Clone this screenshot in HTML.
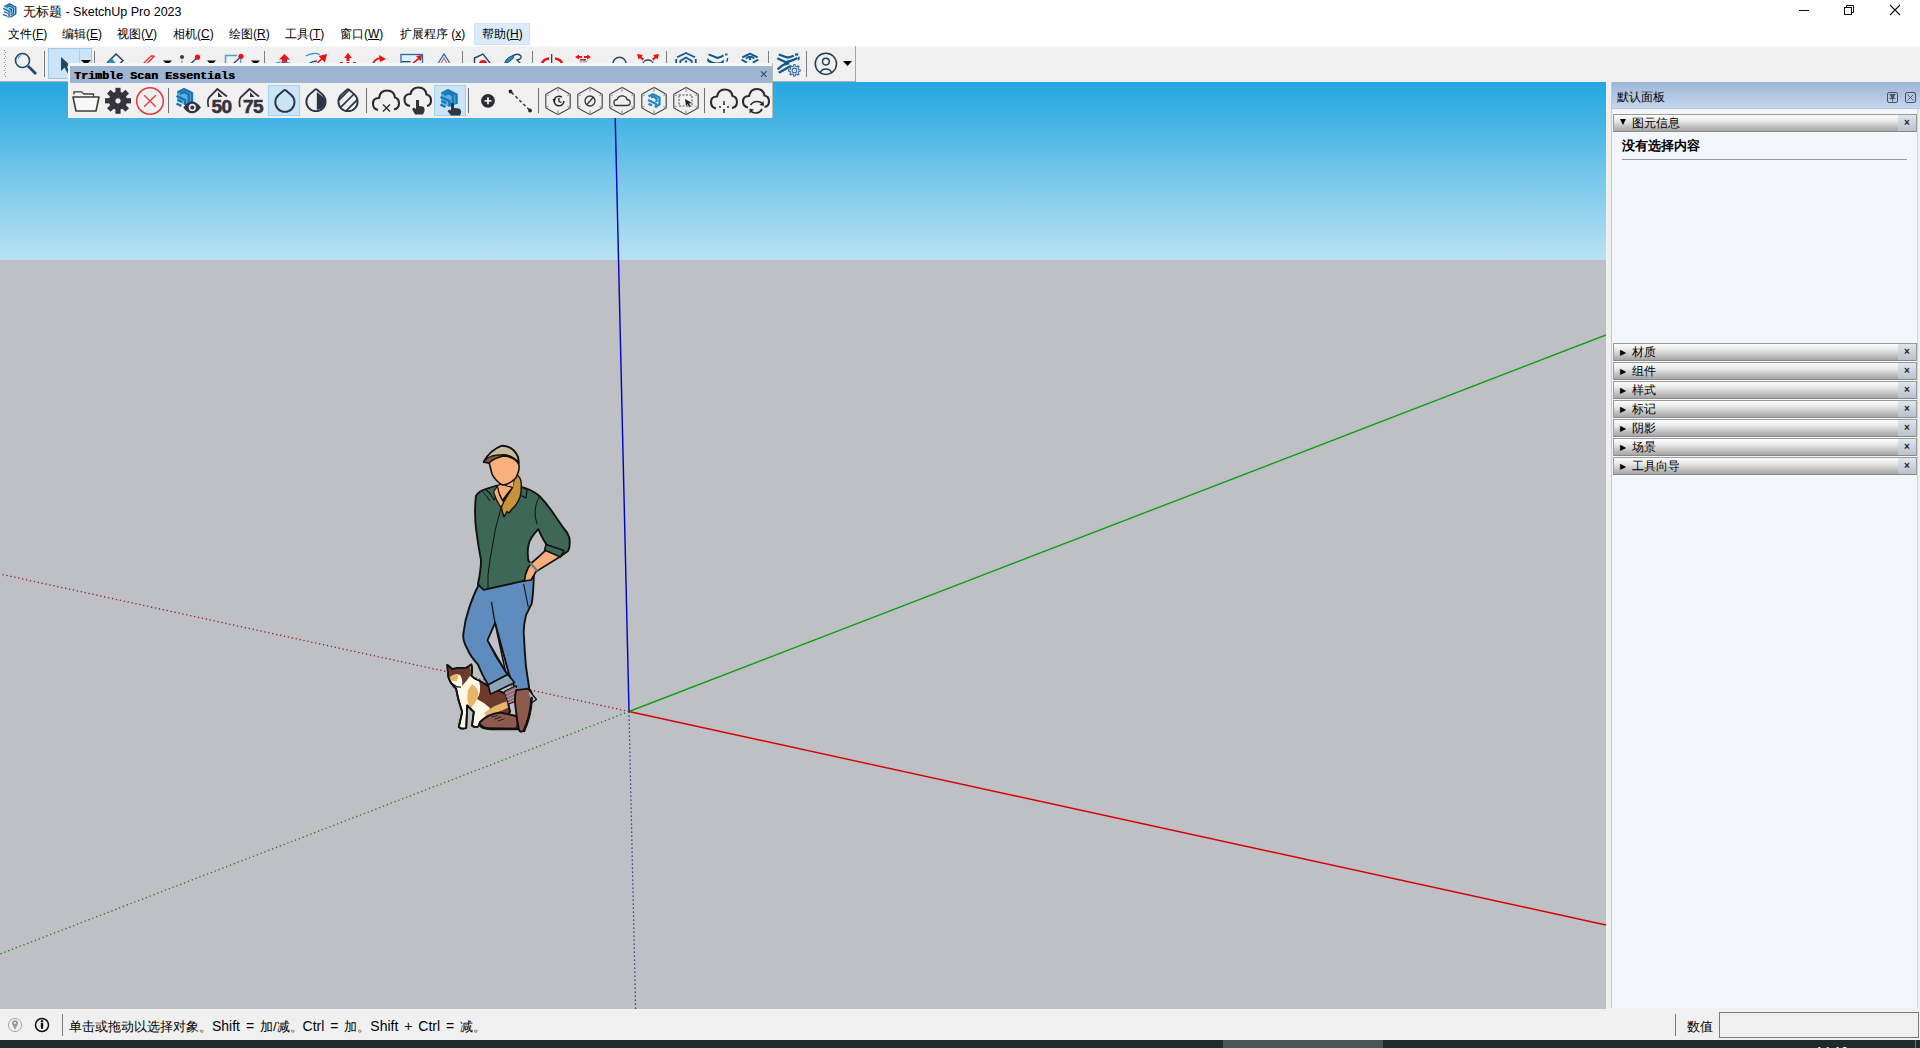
<!DOCTYPE html>
<html><head><meta charset="utf-8">
<style>
*{box-sizing:border-box;margin:0;padding:0}
html,body{width:1920px;height:1048px;overflow:hidden;background:#f0f0f0;font-family:"Liberation Sans",sans-serif;color:#000}
.abs{position:absolute}
#title{left:0;top:0;width:1920px;height:23px;background:#fff}
#menu{left:0;top:23px;width:1920px;height:23px;background:#fff}
.mi{position:absolute;top:4px;font-size:12px;line-height:14px;white-space:nowrap;color:#000}
#toolbar{left:0;top:46px;width:1920px;height:36px;background:#f0f0f0;border-top:1px solid #f6f6f6}
#viewport{left:0;top:82px;width:1606px;height:927px;background:#bfc0c5;overflow:hidden}
#sky{left:0;top:0;width:1606px;height:178px;background:linear-gradient(#24a8df,#48b5e4 25%,#7ac8ea 55%,#b9e2f3)}
#panel{left:1611px;top:82px;width:309px;height:926px;background:#f3f6fb;border-left:1px solid #c8c8c8}
#ptitle{left:0;top:0;width:309px;height:27px;background:linear-gradient(#9db5d6,#c5d6ef);border-bottom:1px solid #b9c6d6}
.sh{position:absolute;left:1px;width:304px;height:18px;background:linear-gradient(#fdfdfd 0%,#e9e9e9 35%,#b9b9b9 80%,#a6a6a6 100%);border:1px solid #9a9a9a;border-bottom-color:#8a8a8a}
.sh .tri{position:absolute;left:6px;top:4px;font-size:8px;line-height:9px}
.sh .t{position:absolute;left:18px;top:1px;font-size:12px;line-height:14px}
.sh .x{position:absolute;right:0;top:0;width:18px;height:16px;background:linear-gradient(#dfe6ee,#b8c2cc);font-size:10px;font-weight:bold;text-align:center;line-height:15px;color:#222}
#status{left:0;top:1009px;width:1920px;height:31px;background:#f0f0f0}
#taskbar{left:0;top:1040px;width:1920px;height:8px;background:#1d2a2e}
.sep{position:absolute;width:1px;background:#7a7a7a}
.lt{font-size:14px}
</style></head><body>
<div id="title" class="abs">
  <div class="abs" style="left:23px;top:4px;font-size:12.5px;line-height:16px;color:#000">无标题 - SketchUp Pro 2023</div>
<svg class="abs" style="left:0;top:0" width="24" height="23" viewBox="0 0 24 23">
<path d="M4 6.5 L9.5 3.8 L15.8 7 L15.8 13.8 L10.5 17.3 L9 17.5 L9 11.3 L3.2 8.5 Z" fill="#9fd6f2" stroke="none"/>
<g stroke="#1a5f95" stroke-width="1.35" fill="none" stroke-linejoin="round">
<path d="M4.3 6.5 L9.5 3.8 L15.8 7 L15.8 13.8 L10.5 17.3"/>
<path d="M6.3 7.3 L9.5 5.9 L13.5 8 L13.5 13 L11 14.8"/>
<path d="M9.2 8.3 L11.3 9.3 L11.3 12.5"/>
<path d="M3.2 8.5 L9 11.3 L9 17.5"/>
<path d="M4 11.5 L7.7 13.3"/>
<path d="M3.2 14.3 L7.7 16.5"/>
</g>
</svg>
<svg class="abs" style="left:1780px;top:0" width="140" height="23" viewBox="1780 0 140 23">
<rect x="1799" y="10" width="10" height="1" fill="#111"/>
<rect x="1844.5" y="7.5" width="7" height="7" fill="none" stroke="#111" stroke-width="1"/>
<path d="M1846.5 7.5 L1846.5 5.5 L1853.5 5.5 L1853.5 12.5 L1851.5 12.5" fill="none" stroke="#111" stroke-width="1"/>
<path d="M1890 5 L1900 15 M1900 5 L1890 15" stroke="#111" stroke-width="1.1"/>
</svg>
</div>
<div id="menu" class="abs">
  <div class="abs" style="left:474px;top:0px;width:56px;height:22px;background:#dcebfb;border:1px solid #cfe3f8"></div>
  <div class="mi" style="left:8px">文件(<u>F</u>)</div>
  <div class="mi" style="left:62px">编辑(<u>E</u>)</div>
  <div class="mi" style="left:117px">视图(<u>V</u>)</div>
  <div class="mi" style="left:173px">相机(<u>C</u>)</div>
  <div class="mi" style="left:229px">绘图(<u>R</u>)</div>
  <div class="mi" style="left:285px">工具(<u>T</u>)</div>
  <div class="mi" style="left:340px">窗口(<u>W</u>)</div>
  <div class="mi" style="left:400px">扩展程序 (<u>x</u>)</div>
  <div class="mi" style="left:482px">帮助(<u>H</u>)</div>
</div>
<div id="toolbar" class="abs"></div>
<svg class="abs" style="left:0;top:0" width="1920" height="84" viewBox="0 0 1920 84">
<!-- gripper -->
<g fill="#9a9a9a"><rect x="4" y="50" width="1" height="1"/><rect x="5" y="52" width="1" height="1"/><rect x="4" y="54" width="1" height="1"/><rect x="5" y="56" width="1" height="1"/><rect x="4" y="58" width="1" height="1"/><rect x="5" y="60" width="1" height="1"/><rect x="4" y="62" width="1" height="1"/><rect x="5" y="64" width="1" height="1"/><rect x="4" y="66" width="1" height="1"/><rect x="5" y="68" width="1" height="1"/><rect x="4" y="70" width="1" height="1"/><rect x="5" y="72" width="1" height="1"/><rect x="4" y="74" width="1" height="1"/><rect x="5" y="76" width="1" height="1"/></g>
<!-- magnifier -->
<circle cx="22.5" cy="60.5" r="7" fill="none" stroke="#1f4868" stroke-width="1.6"/>
<path d="M18 58.5 A5 5 0 0 1 21 55.5" fill="none" stroke="#3fa9e0" stroke-width="1.2"/>
<path d="M28 66 L36 74" stroke="#1f4868" stroke-width="2.6" stroke-linecap="butt"/>
<!-- separators -->
<g fill="#7d7d7d">
<rect x="44" y="51" width="1" height="26"/>
<rect x="94" y="51" width="1" height="26"/>
<rect x="264" y="51" width="1" height="26"/>
<rect x="462" y="51" width="1" height="26"/>
<rect x="532" y="51" width="1" height="26"/>
<rect x="666" y="51" width="1" height="26"/>
<rect x="768" y="51" width="1" height="26"/>
<rect x="806" y="51" width="1" height="26"/>
</g>
<!-- select button -->
<rect x="48.5" y="48.5" width="43" height="30" fill="#cce4f7" stroke="#99c9ef"/>
<rect x="79" y="49" width="1" height="29" fill="#a9d1f1"/>
<path d="M61 57 L61 71 L64.5 67.5 L67.5 73 L69.5 72 L66.8 66.5 L71 66 Z" fill="#1b4a6c"/>
<path d="M81 60 L91 60 L86 65 Z" fill="#000"/>
<!-- eraser -->
<path d="M107 63 L116 54 L123 60.5 L120 63.5" fill="none" stroke="#1f4868" stroke-width="1.5"/>
<path d="M107 63.5 L112 58.5 L116 63.5 Z" fill="#2c8fd0"/>
<!-- pencil -->
<path d="M143.5 63.5 L151 56 M147 63.5 L154.5 56 M151 56 L154.5 56" stroke="#e53030" stroke-width="1.3" fill="none"/>
<path d="M163 60.5 L172 60.5 L167.5 65 Z" fill="#000"/>
<!-- line tools -->
<circle cx="182" cy="57" r="2.1" fill="#1f4868"/>
<rect x="181.5" y="60.5" width="1" height="3" fill="#5b7d95"/>
<path d="M191 63.5 L197 57.5" stroke="#1f4868" stroke-width="1.2"/>
<circle cx="197.5" cy="57.2" r="2.6" fill="#ee1111"/>
<path d="M207 60.5 L216 60.5 L211.5 65 Z" fill="#000"/>
<!-- rectangle -->
<path d="M225.5 64 L225.5 55.5 L237 55.5" fill="none" stroke="#4aa0d6" stroke-width="1.5"/>
<path d="M233.5 63.5 L240 57.5" stroke="#1f4868" stroke-width="1.2"/>
<rect x="240" y="59" width="1.3" height="5" fill="#4aa0d6"/>
<circle cx="241" cy="56.3" r="2.6" fill="#ee1111"/>
<path d="M251 60.5 L260 60.5 L255.5 65 Z" fill="#000"/>
<!-- push pull -->
<path d="M284.3 54 L290 59.5 L287 59.5 L287 64 L282 64 L282 59.5 L279 59.5 Z" fill="#ee1111"/>
<path d="M275 63.5 Q283 60 291 63.5" fill="none" stroke="#2a8fcf" stroke-width="1.2"/>
<!-- follow me -->
<path d="M306 56 Q313 51.5 320 54.5" fill="none" stroke="#2a8fcf" stroke-width="1.3"/>
<path d="M309 63.5 Q313 61 317 61" fill="none" stroke="#1f4868" stroke-width="1.3"/>
<path d="M317 63.5 L322 58.5 L320 56.5 L326 55 L324.5 61 L322.5 59" fill="#ee1111" stroke="#ee1111" stroke-width="1.5"/>
<!-- move -->
<path d="M348 53 L352 58 L349.5 58 L349.5 61 L346.5 61 L346.5 58 L344 58 Z" fill="#ee1111"/>
<rect x="340" y="62" width="3" height="2" fill="#ee1111"/><rect x="353" y="62" width="3" height="2" fill="#ee1111"/><rect x="346.5" y="62" width="3" height="2" fill="#ee1111"/>
<!-- rotate -->
<path d="M373 63.5 Q376 57.5 381 58.5" fill="none" stroke="#ee1111" stroke-width="1.8"/>
<path d="M379 55 L386 59 L380 62 Z" fill="#ee1111"/>
<!-- scale -->
<rect x="401" y="54.5" width="21.5" height="10" fill="#dff0fb" stroke="#1f6fb0" stroke-width="1.3"/>
<rect x="401.5" y="61" width="9" height="1.3" fill="#1f4868"/>
<path d="M411 64 L418 58 L416 56 L422 55 L421 61 L419 59.5 L413 64 Z" fill="#ee1111"/>
<!-- offset -->
<path d="M438 63.5 L444 54 L450 63.5" fill="none" stroke="#1f6fb0" stroke-width="1.3"/>
<path d="M441 63.5 L444 58 L447 63.5" fill="none" stroke="#c07080" stroke-width="1.2"/>
<!-- tape -->
<path d="M474.5 64 L474.5 58 L483 54 L490 63" fill="none" stroke="#1f4868" stroke-width="1.4"/>
<path d="M479 64 A4 4 0 0 1 487 64 Z" fill="#ee1111"/>
<!-- paint -->
<path d="M504.5 63.5 Q506 58 512 56 Q515 55.5 513 58.5 Q509 62 505 64 Z" fill="#2c8fd0" stroke="#1f4868" stroke-width="1"/>
<path d="M512 56 Q518 52.5 521 56 Q522 59 517 60 L521 64" fill="none" stroke="#1f4868" stroke-width="1.3"/>
<!-- orbit -->
<path d="M542 64 Q543 59 549 58.5 M555 58.5 Q561 59 562 64" fill="none" stroke="#ee1111" stroke-width="2.6"/>
<rect x="551" y="54" width="1.3" height="10" fill="#1f4868"/>
<!-- pan -->
<path d="M575 57 L579 54.5 L579 56 L582 56 L582 58 L579 58 L579 59.5 Z M591 57 L587 54.5 L587 56 L584 56 L584 58 L587 58 L587 59.5 Z" fill="#ee1111"/>
<rect x="580" y="59" width="6" height="1.5" fill="#ee1111"/>
<path d="M581 64 L581 60 M584 64 L584 60 L587 62" fill="none" stroke="#5d7a90" stroke-width="1"/>
<!-- zoom -->
<path d="M612.8 64 A6.7 6.7 0 0 1 626.2 64" fill="none" stroke="#1f4868" stroke-width="1.5"/>
<!-- zoom extents -->
<path d="M637 54 L643 55 L641.5 56.5 L644 59 L642.5 60.5 L640 58 L638.5 59.5 Z M659 54 L653 55 L654.5 56.5 L652 59 L653.5 60.5 L656 58 L657.5 59.5 Z" fill="#ee1111"/>
<path d="M643 64 A5 4 0 0 1 653 64" fill="none" stroke="#1f4868" stroke-width="1.3"/>
<!-- trimble blue icons -->
<g fill="none" stroke="#0d5a8f" stroke-width="1.8" stroke-linejoin="round">
<path d="M677 57.2 L686 53 L695 57.2"/>
<path d="M680.2 61 L686 57.4 L691.8 61"/>
</g>
<g fill="#0d5a8f"><rect x="675.3" y="59" width="1.8" height="4.6"/><rect x="694.9" y="59" width="1.8" height="4.6"/><rect x="679.4" y="60.5" width="1.8" height="3.1"/><rect x="690.8" y="60.5" width="1.8" height="3.1"/><circle cx="686" cy="61.4" r="1.2"/></g>
<path d="M708.5 54.3 L717.5 58 Q721 56.8 723.5 55.3" fill="none" stroke="#0d5a8f" stroke-width="2"/>
<rect x="725" y="53.6" width="2.5" height="1.8" fill="#0d5a8f"/>
<path d="M707.3 58 Q712 62.5 717.5 62.5 Q721.5 62.5 724 59.6 L723.5 63.6 Q720 64.4 716 64.2 Q709 63.8 707.3 61 Z" fill="#0d5a8f"/>
<path d="M726.8 58.3 L728.3 57.8 L727.8 61.5 L726.3 62 Z" fill="#0d5a8f"/>
<g fill="none" stroke="#0d5a8f" stroke-width="1.9" stroke-linejoin="round">
<path d="M742.3 57.4 L750 53.6 L757.6 57.4"/>
<path d="M745.8 58.4 Q750 55 754.2 58.4"/>
<path d="M741.5 59.5 L746.8 62.6 M752.8 62.6 L758.4 59.5"/>
</g>
<circle cx="750" cy="58.9" r="1.3" fill="#0d5a8f"/>
<!-- x gear icon -->
<g fill="none" stroke="#0d5a8f" stroke-width="2.3" stroke-linejoin="round">
<path d="M778.8 54.5 Q784 56.5 787.8 57.6 Q791 57 793.8 55.8"/>
<path d="M777.3 58.2 Q782 60.5 786 62.2 Q792 61 797.5 58"/>
<path d="M777.6 69.4 Q782 65.5 787.5 62.6"/>
<path d="M778.8 72.8 Q784 70 791 65.8"/>
</g>
<path d="M784 63.6 L789.5 61.8 L789 64.5 L785 65.5 Z" fill="#0d5a8f"/>
<rect x="795" y="53.4" width="3.2" height="2.2" fill="#0d5a8f"/>
<path d="M798 57 L799.8 56.4 L799.4 60 L797.8 60.6 Z" fill="#0d5a8f"/>
<path d="M798.60 69.46 L800.26 69.69 L800.26 71.11 L798.60 71.34 L798.38 72.03 L798.03 72.70 L799.04 74.04 L798.04 75.04 L796.70 74.03 L796.06 74.37 L795.34 74.60 L795.11 76.26 L793.69 76.26 L793.46 74.60 L792.77 74.38 L792.10 74.03 L790.76 75.04 L789.76 74.04 L790.77 72.70 L790.43 72.06 L790.20 71.34 L788.54 71.11 L788.54 69.69 L790.20 69.46 L790.42 68.77 L790.77 68.10 L789.76 66.76 L790.76 65.76 L792.10 66.77 L792.74 66.43 L793.46 66.20 L793.69 64.54 L795.11 64.54 L795.34 66.20 L796.03 66.42 L796.70 66.77 L798.04 65.76 L799.04 66.76 L798.03 68.10 L798.37 68.74 Z" fill="#f0f0f0" stroke="#3a6e9e" stroke-width="1.1" stroke-linejoin="round"/>
<circle cx="794.4" cy="70.4" r="2.3" fill="none" stroke="#3a6e9e" stroke-width="1.1"/>
<!-- user -->
<circle cx="825.9" cy="63.8" r="10.6" fill="none" stroke="#1a3e5c" stroke-width="1.5"/>
<circle cx="825.9" cy="61.6" r="3.4" fill="none" stroke="#1a3e5c" stroke-width="1.4"/>
<path d="M820.2 72.8 A6 5.5 0 0 1 831.6 72.8" fill="none" stroke="#1a3e5c" stroke-width="1.4"/>
<path d="M843 61 L852 61 L847.5 66 Z" fill="#000"/>
<rect x="855" y="46" width="1" height="36" fill="#a5a5a5"/>
<rect x="0" y="81" width="856" height="1" fill="#a8b0b6"/>
</svg>
<div id="viewport" class="abs">
  <div id="sky" class="abs"></div>
<svg class="abs" style="left:0;top:0" width="1606" height="927" viewBox="0 82 1606 927">
<line x1="629" y1="711.5" x2="1606" y2="925" stroke="#d40000" stroke-width="1.4"/>
<line x1="629" y1="711.5" x2="1606" y2="335" stroke="#10a010" stroke-width="1.4"/>
<line x1="629" y1="711.5" x2="614.4" y2="82" stroke="#0000c0" stroke-width="1.4"/>
<line x1="629" y1="711.5" x2="0" y2="574" stroke="#8a2030" stroke-width="1.3" stroke-dasharray="1.3 2.7"/>
<line x1="629" y1="711.5" x2="0" y2="954" stroke="#207820" stroke-width="1.3" stroke-dasharray="1.3 2.8"/>
<line x1="629" y1="711.5" x2="635.6" y2="1009" stroke="#202070" stroke-width="1.3" stroke-dasharray="1.3 2.7"/>
<!-- cat -->
<g stroke="#111" stroke-width="1.8" stroke-linejoin="round">
<path d="M447.3 664.9 L452.5 669.2 Q459 667.2 465.5 668.2 L471.3 664.5 Q473 670 471.2 675.5 Q474 679 479 680.5 L488 686 L506 694 L510 712 Q505 718 499 720.5 L480 722.5 L478.5 726.2 Q474.5 728 472 725.5 L473.8 712 L467.2 705.5 L466.2 728 Q461.5 729.8 458.8 726.8 L462.2 712 Q458 700 456 688.5 Q450.5 684 448.4 677.1 Z" fill="#fff8e8"/>
</g>
<g stroke="none">
<path d="M448.5 666.5 L452.5 669.5 Q459 667.5 465.5 668.5 L470.3 666 Q471.5 671 470.3 675.5 Q466 682 462 686 Q463 679 460 675 Q456 673 452 676 L449.5 678 Q448 672 448.5 666.5 Z" fill="#6b3a2c"/>
<path d="M450 677 Q454 673.5 458.5 675 L457 681 Q452 682 450 679 Z" fill="#e8b468"/>
<path d="M479 680.5 L488 686 L506 694 L510 712 Q505 718 499 720.5 L481 722 Q487 716 490 708 Q485 703 477 699 Q482 692 479 680.5 Z" fill="#6b3a2c"/>
<path d="M472 684 Q480 688 478 697 Q474 706 470 708 Q466 700 468 690 Z" fill="#e8b468"/>
<path d="M484 713 Q496 704 508 701 L509.5 707 Q498 712 487 718 Z" fill="#e8b468"/>
</g>
<path d="M447.3 664.9 L452.5 669.2 Q459 667.2 465.5 668.2 L471.3 664.5 Q473 670 471.2 675.5 Q474 679 479 680.5 L488 686 L506 694 L510 712 Q505 718 499 720.5 L480 722.5 L478.5 726.2 Q474.5 728 472 725.5 L473.8 712 L467.2 705.5 L466.2 728 Q461.5 729.8 458.8 726.8 L462.2 712 Q458 700 456 688.5 Q450.5 684 448.4 677.1 Z" fill="none" stroke="#111" stroke-width="1.8" stroke-linejoin="round"/>
<path d="M452 683.5 Q456 687.5 461 687" fill="none" stroke="#111" stroke-width="1.2"/>
<g stroke="#111" stroke-width="1.9" stroke-linejoin="round" stroke-linecap="round">
<!-- left shoe -->
<path d="M480 722 Q478.5 727.5 485 728.3 L516.3 728.8 Q519 724 516.3 716 L500 712.5 Q488 714 480 722 Z" fill="#8e5a4d"/>
<path d="M481 725.5 Q484 729 492 729 L517 729" fill="none" stroke-width="2.6"/>
<path d="M492 717 L498 715.5 M495 719 L501 717 M498 721 L504 719" stroke="#2a2020" stroke-width="1"/>
<!-- jeans -->
<path d="M481.3 575 L533.8 575 Q533.5 592 531.7 603.6 L526 615.1 Q523.6 625 523.7 632.3 Q524.5 650 526 666.6 L529.4 689.5 L516 691 L508.8 673.5 L495.1 623.1 L487.6 640.3 Q495 656 505.4 671.2 L507.7 674.6 L488.2 684.9 Q482 675 477.9 664.3 Q470 656 467.6 649.4 Q462 640 463.6 632.3 Q465 620 468.7 609.4 Q473 596 477.9 586.5 Z" fill="#5f8cbf"/>
<path d="M495.1 623.1 L487.6 640.3 L505.4 671.2 Z" fill="#c0c1c6" stroke-width="1.6"/>
<path d="M491.6 602.5 Q493 612 495.1 623.1" fill="none" stroke-width="1.3"/>
<path d="M488.2 684.9 L507.7 674.6 L514.5 682.6 L490.5 694.1 Z" fill="#8ea4b8" stroke-width="1.6"/>
<path d="M523.7 584.2 Q526 596 528.3 607" fill="none" stroke-width="1.1"/>
<!-- socks -->
<path d="M504.1 691.6 L516.3 685.5 L517.1 700.8 L508.7 703.9 Z" fill="#8a7078" stroke-width="1.1"/>
<path d="M505 694 L516.5 688.5 M506 697 L516.8 692 M507 700 L517 695.5 M508 703 L517 699" stroke="#d8a0b0" stroke-width="0.8"/>
<!-- right shoe -->
<path d="M516.3 690.1 L527.8 688.6 Q533 691 531.6 697.7 Q531 715 524 730 Q521 733.5 519 730 Q517 720 515.6 708 Q514 697 516.3 690.1 Z" fill="#8e5a4d"/>
<path d="M528 689 L536.5 699.5 L531.5 703" fill="#aeb4bc" stroke-width="1.2"/>
<path d="M531.6 698 Q531 715 524 731" fill="none" stroke-width="2.6"/>
<!-- shirt -->
<path d="M475.9 496 Q479 491 485.6 489.2 L497 485.7 L503 500 L512.7 487.3 L521 486.9 Q531 489 539.4 496 Q546 503 550.9 509.8 L563.4 528 Q570 535 569.7 541.8 Q570 548 568 551 L560 556.7 Q548 552 538.3 529.2 Q530 538 528.5 545 Q527 552 528.5 561 L533.7 566 Q530 574 527 578 L524.5 580.7 L519.1 581.9 L483.6 589.9 L477.9 584.2 Q481 570 481 560 Q478 545 476.4 531.5 Q474 515 475.9 496 Z" fill="#3d6756"/>
<path d="M503 500 Q494 530 490 560 Q487 575 488 588" fill="none" stroke-width="1"/>
<path d="M539 497 Q532 510 537 524" fill="none" stroke-width="1"/>
<path d="M483 492 Q487 496 490 501" fill="none" stroke-width="1"/>
<path d="M485.5 489.5 L496.5 485.8 L499 492 L494 500 L490.5 494 Z" fill="#3d6756" stroke-width="1.2"/>
<path d="M521 487 L527 490 L526 498 L520 495 Z" fill="#3d6756" stroke-width="1.2"/>
<!-- forearm -->
<path d="M547.4 548.7 Q556 552 560 556.7 L536 571.6 Q533 577 531 580 L524.5 581 Q525 574 528 568 L531.5 563 Q540 556 547.4 548.7 Z" fill="#f6ae7c" stroke-width="1.7"/>
<path d="M546 544.5 L564 550.5 L560.5 557 L544.5 550 Z" fill="#3d6756" stroke-width="1.5"/>
<path d="M530.5 563.5 L536.5 570" stroke="#7a7a7a" stroke-width="2.4"/>
<!-- hair -->
<path d="M515.5 473.5 Q520.5 477 521 481.5 Q522 489 520 497 Q517 505 512 509 L509 513 L507 511.5 L504 517 L502 510.5 Q501 507 502 505 Q506 498 509 493 Q512 489 512.7 486 Z" fill="#c8923a" stroke-width="1.4"/>
<!-- neck -->
<path d="M497 478 L514 476 L513 488 L497 487 Z" fill="#f6ae7c" stroke="none"/>
<path d="M497 485.7 Q502 483 507 486 L512.7 487.3 Q506 495 502.5 500.3 Q498 493 497 485.7 Z" fill="#f6ae7c" stroke-width="1.2"/>
<path d="M497.5 486 Q499 496 502.5 500.3 Q505 503 500.5 507 Q496 500 493.5 492 Z" fill="#f6ae7c" stroke-width="1.2"/>
<!-- face -->
<path d="M489 462 Q491 470 492 474 Q496 482 502.8 485 Q510 484 515.8 478 Q520 470 518.9 465 Q517 458 505 456 Q494 456 489 462 Z" fill="#f8b07c" stroke-width="1.6"/>
<!-- hat -->
<path d="M483.7 462 Q490 450 502 445.7 Q513 446 518 456.8 L518.9 463 Q512 455 503 455 Q492 456 488.5 462.5 Z" fill="#c6bd9d" stroke-width="1.9"/>
<path d="M483.7 462 Q486 458 492 456 Q500 454 505 455.5 Q494 458 489 463 Z" fill="#7b5a3f" stroke-width="1.3"/>
</g>
</svg>
</div>
<div id="panel" class="abs">
  <div id="ptitle" class="abs">
    <div class="abs" style="left:5px;top:8px;font-size:12px;line-height:14px">默认面板</div>
<svg class="abs" style="left:270px;top:0" width="39" height="27" viewBox="1882 82 39 27">
<rect x="1887.5" y="92.5" width="10" height="10" rx="1.5" fill="none" stroke="#4a5260" stroke-width="1"/>
<path d="M1889.5 94.5 L1895.5 94.5 M1890.5 94.5 L1892.5 99 L1894.5 94.5 Z M1889.5 98.5 L1895.5 98.5 M1892.5 98.5 L1892.5 101.5" fill="#555" stroke="#555" stroke-width="1.2"/>
<rect x="1905.5" y="92.5" width="10" height="10" rx="1.5" fill="none" stroke="#4a5260" stroke-width="1"/>
<path d="M1907.5 94.5 L1913.5 100.5 M1913.5 94.5 L1907.5 100.5" stroke="#555" stroke-width="0.9"/>
</svg>
  </div>
  <div class="sh" style="top:32px"><span class="tri" style="left:6px;top:4px;width:0;height:0;border-left:3.5px solid transparent;border-right:3.5px solid transparent;border-top:6px solid #000;font-size:0"></span><span class="t">图元信息</span><span class="x">×</span></div>
  <div class="abs" style="left:10px;top:57px;font-size:13px;font-weight:bold;line-height:14px">没有选择内容</div>
  <div class="abs" style="left:10px;top:77px;width:285px;height:1px;background:#9a9a9a"></div>
  <div class="sh" style="top:261px"><span class="tri">▶</span><span class="t">材质</span><span class="x">×</span></div>
  <div class="sh" style="top:280px"><span class="tri">▶</span><span class="t">组件</span><span class="x">×</span></div>
  <div class="sh" style="top:299px"><span class="tri">▶</span><span class="t">样式</span><span class="x">×</span></div>
  <div class="sh" style="top:318px"><span class="tri">▶</span><span class="t">标记</span><span class="x">×</span></div>
  <div class="sh" style="top:337px"><span class="tri">▶</span><span class="t">阴影</span><span class="x">×</span></div>
  <div class="sh" style="top:356px"><span class="tri">▶</span><span class="t">场景</span><span class="x">×</span></div>
  <div class="sh" style="top:375px"><span class="tri">▶</span><span class="t">工具向导</span><span class="x">×</span></div>
  <div class="abs" style="left:305px;top:27px;width:4px;height:899px;background:#f0f0f0;border-left:1px solid #d4d4d4"></div>
</div>
<div class="abs" style="left:68px;top:63px;width:705px;height:55px;background:#f6f6f6;border-right:1px solid #b8b8b8"></div>
<div class="abs" style="left:70px;top:66px;width:702px;height:17px;background:#9fb4d0"></div>
<div class="abs" style="left:70px;top:83px;width:702px;height:35px;background:#f0f0f0"></div>
<div class="abs" style="left:74px;top:67.5px;font-family:'Liberation Mono',monospace;font-weight:bold;font-size:11.67px;line-height:16px;color:#000;white-space:pre;text-shadow:0.5px 0 0 #000">Trimble Scan Essentials</div>
<svg class="abs" style="left:0;top:0" width="800" height="120" viewBox="0 0 800 120">
<path d="M761 71.3 L766.5 76.8 M766.5 71.3 L761 76.8" stroke="#3b4658" stroke-width="1.1"/>
<g fill="#6e6e6e"><rect x="168" y="88" width="1" height="25"/><rect x="366" y="88" width="1" height="25"/><rect x="468" y="88" width="1" height="25"/><rect x="538" y="88" width="1" height="25"/><rect x="704" y="88" width="1" height="25"/></g>
<!-- highlights -->
<rect x="268.5" y="85.5" width="31" height="30" fill="#cce4f7" stroke="#a5cff0"/>
<rect x="434.5" y="85.5" width="31" height="30" fill="#cce4f7" stroke="#a5cff0"/>
<!-- folder -->
<path d="M74 94.5 L74 91.8 L81.5 91.8 L84 94 L93.5 94 L93.5 97" fill="#f6f6f6" stroke="#3c3c3c" stroke-width="1.3"/>
<path d="M73 97 L99 97 L96 111 L76 111 Z" fill="#f8f8f8" stroke="#3c3c3c" stroke-width="1.6" stroke-linejoin="round"/>
<!-- gear -->
<g transform="translate(118 100.8)" fill="#34343e">
<circle r="9.2"/>
<g id="teeth"><rect x="-2.6" y="-13" width="5.2" height="6"/><rect x="-2.6" y="7" width="5.2" height="6"/><rect x="-13" y="-2.6" width="6" height="5.2"/><rect x="7" y="-2.6" width="6" height="5.2"/></g>
<g transform="rotate(45)"><rect x="-2.6" y="-13" width="5.2" height="6"/><rect x="-2.6" y="7" width="5.2" height="6"/><rect x="-13" y="-2.6" width="6" height="5.2"/><rect x="7" y="-2.6" width="6" height="5.2"/></g>
<circle r="2.6" fill="#f0f0f0"/>
</g>
<!-- red x circle -->
<circle cx="150" cy="101" r="13.3" fill="none" stroke="#e0383c" stroke-width="1.5"/>
<path d="M144.2 95.2 L155.8 106.8 M155.8 95.2 L144.2 106.8" stroke="#e0383c" stroke-width="1.3"/>
<!-- SU eye -->
<path d="M177 92.5 L184 89 L192.5 93 L192.5 103 L185 105 L177 101 Z" fill="#5ab0e0"/>
<g fill="none" stroke="#1673b5" stroke-width="2.4" stroke-linejoin="round">
<path d="M177.5 92.5 L184 89 L192 93 L192 103"/>
<path d="M180 94 L184 92 L188.8 94.5 L188.8 104"/>
<path d="M176.5 96 L185.2 100 L185.2 105"/>
<path d="M177.5 100 L182 102"/>
<path d="M176.5 103.5 L181.5 106"/>
</g>
<path d="M183.3 107.4 Q192 95.5 201 107.4 Q192 119.3 183.3 107.4 Z" fill="#34343e"/>
<circle cx="192.3" cy="107.4" r="3.6" fill="#f0f0f0"/>
<circle cx="192.3" cy="107.4" r="2" fill="#34343e"/>
<!-- 50 -->
<path d="M208.5 107 Q207 101 209 97.5 L217.3 89 L227 96.5" fill="none" stroke="#34343e" stroke-width="1.8"/>
<path d="M218 92 L222.5 97 L218 97 Z" fill="#34343e"/>
<text x="221.5" y="113" font-family="Liberation Sans" font-weight="bold" font-size="19" fill="#34343e" text-anchor="middle" letter-spacing="-0.6" stroke="#34343e" stroke-width="0.6">50</text>
<path d="M240 107 Q238.5 101 240.5 97.5 L249.5 89 L259 96.5" fill="none" stroke="#34343e" stroke-width="1.8"/>
<path d="M250 92 L254.5 97 L250 97 Z" fill="#34343e"/>
<text x="253" y="113" font-family="Liberation Sans" font-weight="bold" font-size="19" fill="#34343e" text-anchor="middle" letter-spacing="-0.6" stroke="#34343e" stroke-width="0.6">75</text>
<!-- drops -->
<path d="M278.3 95.3 L284.1 90.3 Q284.9 89.7 285.7 90.3 L291.5 95.3 A9.6 9.6 0 1 1 278.3 95.3 Z" fill="none" stroke="#2b3348" stroke-width="1.9"/>
<path d="M309.4 94.6 L315.2 89.6 Q316.0 89.0 316.8 89.6 L322.6 94.6 A9.6 9.6 0 1 1 309.4 94.6 Z" fill="none" stroke="#2b3348" stroke-width="1.9"/>
<path d="M316.8 92 L322 96 A7.6 7.6 0 0 1 316.8 109.6 Z" fill="#2b3348"/>
<defs><clipPath id="dc3"><path d="M341.4 94.6 L347.2 89.6 Q348.0 89.0 348.8 89.6 L354.6 94.6 A9.6 9.6 0 1 1 341.4 94.6 Z"/></clipPath></defs>
<g clip-path="url(#dc3)" stroke="#2b3348" stroke-width="1.7"><path d="M335 104 L352 87"/><path d="M338 110 L357 91"/><path d="M343 114 L361 96"/></g>
<path d="M341.4 94.6 L347.2 89.6 Q348.0 89.0 348.8 89.6 L354.6 94.6 A9.6 9.6 0 1 1 341.4 94.6 Z" fill="none" stroke="#2b3348" stroke-width="1.9"/>
<!-- cloud x -->
<path d="M378 110 Q373 109 373 103.5 Q373 98 379 98 Q380 90.5 387 90.5 Q394 90.5 395 97.5 Q399 98.5 399 103.5 Q399 108.5 394 109.5" fill="none" stroke="#2b2b2b" stroke-width="2.1"/>
<path d="M383 104.5 L390 111.5 M390 104.5 L383 111.5" stroke="#2b2b2b" stroke-width="1.3"/>
<!-- cloud download hand -->
<path d="M410 106 Q404.5 105 404.5 99.5 Q404.5 94 410.5 94 Q412 87.5 418.5 87.5 Q425.5 87.5 426.5 94.5 Q431 95.5 431 100.5 Q431 105 427 106" fill="none" stroke="#2b2b2b" stroke-width="2.1"/>
<path d="M416 100 L419 100 L419 106 L423 106.5 Q425 107.5 424.5 111 L423 114.5 L415 114.5 L412 109 L414 107.5 L416 109 Z" fill="#34343e"/>
<!-- SU hand -->
<path d="M441 93.5 L448 90 L457 94.5 L457 104 L449 107 L441 103 Z" fill="#5ab0e0"/>
<g fill="none" stroke="#1673b5" stroke-width="2.4" stroke-linejoin="round">
<path d="M441.5 93.5 L448 90.2 L456.5 94.5 L456.5 104"/>
<path d="M444 95 L448 93 L453 95.5 L453 105"/>
<path d="M440.5 97 L449.5 101 L449.5 106.5"/>
<path d="M441.5 101 L446 103"/>
<path d="M440.5 104.5 L445.5 107"/>
</g>
<path d="M451 103 L454 103 L454 108 L459 108.5 Q461.5 109.5 461 113 L460 115.5 L451 115.5 L447.5 111 L449.5 109.5 L451 110.5 Z" fill="#34343e"/>
<!-- plus circle -->
<circle cx="488" cy="100.8" r="6.9" fill="#2b2b33"/>
<path d="M484.5 100.8 L491.5 100.8 M488 97.3 L488 104.3" stroke="#f0f0f0" stroke-width="1.8"/>
<!-- dashed line -->
<circle cx="510.5" cy="91.5" r="1.9" fill="#2b2b33"/><circle cx="530" cy="110.5" r="1.9" fill="#2b2b33"/>
<path d="M511.5 92.5 L529 109.5" stroke="#2b2b33" stroke-width="1.4" stroke-dasharray="3 2.5"/>
<path d="M558.0 87.3 L570.2 94.2 L570.2 107.9 L558.0 114.7 L545.8 107.9 L545.8 94.2 Z" fill="none" stroke="#3e3e3e" stroke-width="1.1"/><path d="M558.0 87.3 L558.0 91.5 M570.2 94.2 L567.4 95.8 M570.2 107.9 L567.4 106.3 M558.0 114.7 L558.0 110.5 M545.8 107.9 L548.6 106.3 M545.8 94.2 L548.6 95.8" stroke="#9a9a9a" stroke-width="1.3"/><circle cx="559" cy="101" r="4.8" fill="none" stroke="#222" stroke-width="1.6" stroke-dasharray="25 5"/><path d="M552.5 99 L556 99 L554 102 Z" fill="#222"/><path d="M559 98 L559 101.5 L561.5 102.5" fill="none" stroke="#222" stroke-width="1.3"/><path d="M590.0 87.3 L602.2 94.2 L602.2 107.9 L590.0 114.7 L577.8 107.9 L577.8 94.2 Z" fill="none" stroke="#3e3e3e" stroke-width="1.1"/><path d="M590.0 87.3 L590.0 91.5 M602.2 94.2 L599.4 95.8 M602.2 107.9 L599.4 106.3 M590.0 114.7 L590.0 110.5 M577.8 107.9 L580.6 106.3 M577.8 94.2 L580.6 95.8" stroke="#9a9a9a" stroke-width="1.3"/><circle cx="590" cy="101" r="5" fill="none" stroke="#333" stroke-width="1.3"/><path d="M586.5 105 L593.5 97" stroke="#333" stroke-width="1.3"/><path d="M622.0 87.3 L634.2 94.2 L634.2 107.9 L622.0 114.7 L609.8 107.9 L609.8 94.2 Z" fill="none" stroke="#3e3e3e" stroke-width="1.1"/><path d="M622.0 87.3 L622.0 91.5 M634.2 94.2 L631.4 95.8 M634.2 107.9 L631.4 106.3 M622.0 114.7 L622.0 110.5 M609.8 107.9 L612.6 106.3 M609.8 94.2 L612.6 95.8" stroke="#9a9a9a" stroke-width="1.3"/><path d="M614.5 105 Q612.5 100 617 99.5 Q619 95 623.5 96 Q627 97 627 99.5 Q631 100 630 104 Q629.5 105.5 627 105.5 L616 105.5 Z" fill="none" stroke="#333" stroke-width="1.3"/><path d="M654.0 87.3 L666.2 94.2 L666.2 107.9 L654.0 114.7 L641.8 107.9 L641.8 94.2 Z" fill="none" stroke="#3e3e3e" stroke-width="1.1"/><path d="M654.0 87.3 L654.0 91.5 M666.2 94.2 L663.4 95.8 M666.2 107.9 L663.4 106.3 M654.0 114.7 L654.0 110.5 M641.8 107.9 L644.6 106.3 M641.8 94.2 L644.6 95.8" stroke="#9a9a9a" stroke-width="1.3"/><g fill="none" stroke="#1e88c7" stroke-width="2.3" stroke-linejoin="round">
<path d="M648.5 96.5 L653 94.3 L659.5 97.5 L659.5 104.5 L655 107"/>
<path d="M648 100 L656 103.8 L656 107.5"/>
<path d="M651 97.5 L653 96.6 L656.5 98.4 L656.5 102"/>
<path d="M648.5 103.8 L652 105.5"/>
</g><path d="M686.0 87.3 L698.2 94.2 L698.2 107.9 L686.0 114.7 L673.8 107.9 L673.8 94.2 Z" fill="none" stroke="#3e3e3e" stroke-width="1.1"/><path d="M686.0 87.3 L686.0 91.5 M698.2 94.2 L695.4 95.8 M698.2 107.9 L695.4 106.3 M686.0 114.7 L686.0 110.5 M673.8 107.9 L676.6 106.3 M673.8 94.2 L676.6 95.8" stroke="#9a9a9a" stroke-width="1.3"/><rect x="679" y="95" width="13" height="11" fill="none" stroke="#444" stroke-width="1" stroke-dasharray="2 1.5"/><path d="M685 99 L692 103 L689 103.5 L690.5 106.5 L689 107 L687.5 104 L686 106 Z" fill="#222"/>
<!-- cloud dots -->
<path d="M716 108.5 Q711 107.5 711 102 Q711 96.5 717 96.5 Q718.5 89.5 724.5 89.5 Q731.5 89.5 732.5 96 Q737 97 737 102 Q737 107 732 108" fill="none" stroke="#2b2b2b" stroke-width="2.1"/>
<path d="M724 101 L724 104 M724 110 L724 113 M719 107 L721 107 M727 107 L729 107" stroke="#2b2b2b" stroke-width="1.4"/>
<path d="M724 111 L722.8 109 L725.2 109 Z M724 103 L722.8 105 L725.2 105 Z" fill="#2b2b2b"/>
<!-- cloud sync -->
<path d="M748 107.5 Q743 106.5 743 101.5 Q743 96 749 96 Q750.5 89 756.5 89 Q763.5 89 764.5 95.5 Q769 96.5 769 101.5 Q769 106 764.5 107" fill="none" stroke="#2b2b2b" stroke-width="2.1"/>
<path d="M750.5 105 Q753 101.5 757 101.5 Q760.5 101.5 762.5 103.5" fill="none" stroke="#2b2b2b" stroke-width="1.7"/>
<path d="M763.5 101 L764 106 L759.5 105 Z" fill="#2b2b2b"/>
<path d="M762 109 Q760 113 756 113 Q752.5 113 750.5 111" fill="none" stroke="#2b2b2b" stroke-width="1.7"/>
<path d="M749.5 113.5 L749.5 108.5 L754 109.5 Z" fill="#2b2b2b"/>
</svg>
<div id="status" class="abs">
  <svg class="abs" style="left:0;top:0" width="60" height="31" viewBox="0 1009 60 31">
<circle cx="15" cy="1025" r="6.6" fill="none" stroke="#a8a8a8" stroke-width="1"/>
<path d="M15 1030 L12.3 1024.5 A3 3 0 1 1 17.7 1024.5 Z" fill="#9a9a9a"/>
<circle cx="15" cy="1023" r="1.1" fill="#f0f0f0"/>
<circle cx="42" cy="1025" r="6.5" fill="none" stroke="#111" stroke-width="1.5"/>
<circle cx="42" cy="1021.3" r="1.2" fill="#111"/>
<path d="M40.8 1023 L43.2 1023 L43.2 1026.5 L42.8 1029 L41.2 1029 L40.8 1026.5 Z" fill="#111"/>
</svg>
  <div class="sep" style="left:62px;top:5px;height:22px"></div>
  <div id="stxt" class="abs" style="left:69px;top:10px;font-size:13px;line-height:15px;white-space:nowrap;word-spacing:2px">单击或拖动以选择对象。<span class="lt">Shift = </span>加/减。<span class="lt">Ctrl = </span>加。<span class="lt">Shift + Ctrl = </span>减。</div>
  <div class="sep" style="left:1675px;top:5px;height:22px"></div>
  <div class="abs" style="left:1687px;top:10px;font-size:13px;line-height:15px">数值</div>
  <div class="abs" style="left:1719px;top:3px;width:200px;height:26px;border:1px solid #7a7a7a;background:#f0f0f0"></div>
</div>
<div id="taskbar" class="abs">
  <div class="abs" style="left:1223px;top:0;width:160px;height:8px;background:#4a5759"></div>
  <div class="abs" style="left:1915px;top:0;width:1px;height:8px;background:#6a7476"></div>
  <div class="abs" style="left:1816px;top:5px;font-size:12px;line-height:14px;color:#fff;white-space:nowrap;letter-spacing:0.5px">14:10</div>
</div>
</body></html>
